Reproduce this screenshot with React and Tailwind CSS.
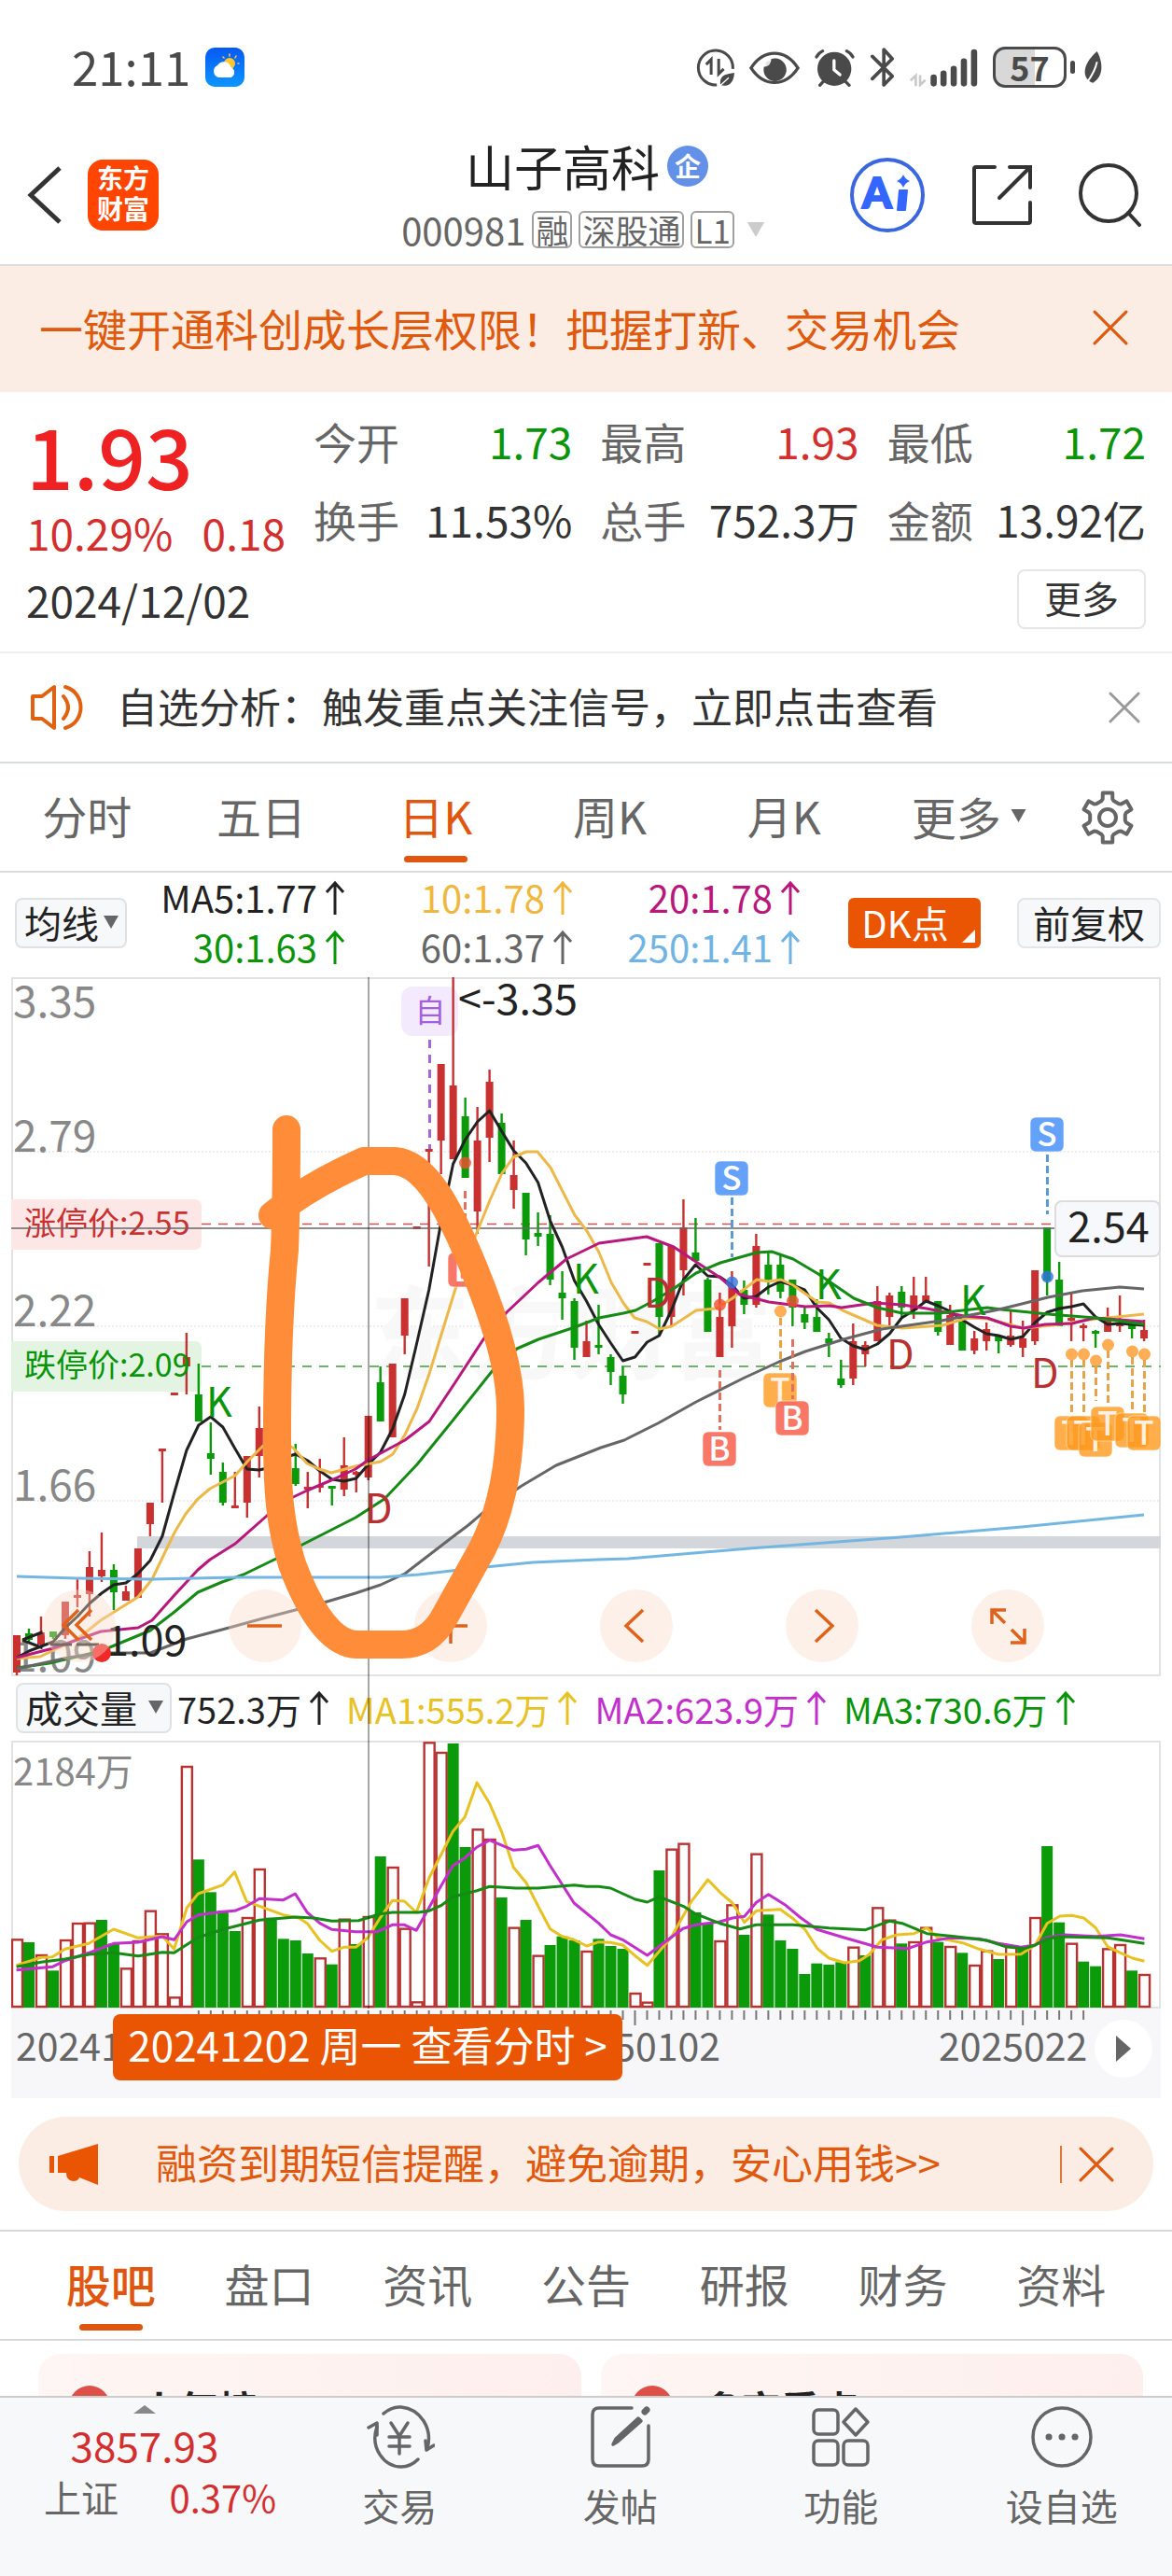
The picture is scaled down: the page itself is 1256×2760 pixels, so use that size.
import React from "react";

/* ---------- market data (y values in chart units) ---------- */

// [direction, high, body top, body bottom, low]
const CANDLES = [
  ["r", 1753, 1753, 1793, 1796], ["g", 1746, 1751, 1758, 1762], ["r", 1733, 1750, 1763, 1766], ["g", 1749, 1749, 1755, 1757],
  ["r", 1717, 1717, 1753, 1757], ["r", 1691, 1710, 1713, 1723], ["r", 1663, 1680, 1709, 1733], ["r", 1643, 1683, 1690, 1696],
  ["g", 1677, 1683, 1707, 1726], ["r", 1700, 1706, 1716, 1716], ["r", 1660, 1660, 1713, 1713], ["r", 1611, 1611, 1634, 1647],
  ["r", 1553, 1553, 1556, 1611], ["r", 1493, 1493, 1496, 1496], ["r", 1429, 1455, 1465, 1495], ["g", 1462, 1495, 1524, 1524],
  ["g", 1525, 1558, 1564, 1581], ["g", 1568, 1578, 1611, 1614], ["r", 1578, 1614, 1617, 1617], ["r", 1561, 1561, 1611, 1627],
  ["r", 1508, 1531, 1561, 1584], ["g", 1540, 1550, 1570, 1580], ["g", 1550, 1560, 1580, 1590], ["g", 1548, 1574, 1591, 1593],
  ["r", 1578, 1594, 1597, 1617], ["r", 1564, 1592, 1595, 1600], ["g", 1593, 1593, 1596, 1614], ["r", 1541, 1571, 1597, 1604],
  ["r", 1577, 1578, 1581, 1600], ["r", 1518, 1518, 1584, 1587], ["g", 1465, 1482, 1524, 1524], ["r", 1462, 1462, 1541, 1541],
  ["r", 1392, 1392, 1432, 1452], ["r", 1315, 1315, 1318, 1318], ["r", 1232, 1232, 1235, 1358], ["r", 1141, 1141, 1223, 1259],
  ["r", 1048, 1164, 1243, 1243], ["g", 1177, 1197, 1263, 1263], ["r", 1187, 1223, 1299, 1323], ["r", 1147, 1160, 1220, 1246],
  ["g", 1194, 1204, 1259, 1259], ["r", 1223, 1260, 1276, 1296], ["g", 1279, 1279, 1329, 1346], ["g", 1300, 1322, 1326, 1336],
  ["g", 1303, 1323, 1372, 1378], ["g", 1363, 1386, 1392, 1415], ["g", 1392, 1395, 1445, 1458], ["r", 1416, 1438, 1455, 1455],
  ["g", 1399, 1442, 1445, 1452], ["g", 1452, 1455, 1471, 1485], ["g", 1465, 1475, 1495, 1505], ["r", 1427, 1427, 1430, 1430],
  ["r", 1354, 1354, 1357, 1357], ["g", 1333, 1333, 1412, 1432], ["r", 1336, 1336, 1412, 1422], ["r", 1286, 1316, 1362, 1389],
  ["g", 1306, 1343, 1352, 1352], ["g", 1370, 1372, 1428, 1428], ["r", 1386, 1412, 1455, 1455], ["r", 1363, 1379, 1422, 1445],
  ["g", 1373, 1383, 1399, 1409], ["r", 1323, 1336, 1399, 1402], ["g", 1343, 1356, 1372, 1388], ["g", 1346, 1356, 1385, 1392],
  ["g", 1372, 1372, 1402, 1422], ["g", 1402, 1409, 1418, 1425], ["g", 1393, 1412, 1428, 1428], ["g", 1429, 1435, 1440, 1455],
  ["g", 1458, 1478, 1485, 1488], ["r", 1419, 1438, 1478, 1485], ["r", 1438, 1442, 1452, 1465], ["r", 1379, 1395, 1438, 1438],
  ["r", 1386, 1389, 1412, 1422], ["g", 1379, 1385, 1402, 1412], ["r", 1369, 1389, 1405, 1414], ["r", 1369, 1389, 1396, 1396],
  ["g", 1395, 1395, 1428, 1432], ["r", 1399, 1410, 1442, 1442], ["g", 1417, 1417, 1448, 1448], ["r", 1427, 1435, 1448, 1452],
  ["r", 1418, 1425, 1438, 1448], ["g", 1432, 1432, 1438, 1451], ["r", 1406, 1432, 1442, 1444], ["r", 1416, 1435, 1445, 1455],
  ["r", 1362, 1362, 1438, 1442], ["g", 1316, 1316, 1373, 1389], ["g", 1353, 1372, 1422, 1422], ["r", 1387, 1413, 1416, 1438],
  ["r", 1419, 1421, 1424, 1438], ["g", 1426, 1427, 1430, 1445], ["r", 1402, 1415, 1428, 1428], ["r", 1389, 1418, 1422, 1428],
  ["g", 1421, 1421, 1425, 1435], ["r", 1415, 1426, 1435, 1438],
];

const MA5 = [
  1777, 1770, 1765, 1760, 1745, 1733, 1719, 1708, 1699, 1697, 1687, 1673, 1647, 1600, 1555, 1528, 1519, 1530, 1553, 1575,
  1576, 1573, 1563, 1559, 1566, 1577, 1586, 1588, 1585, 1570, 1557, 1532, 1495, 1440, 1383, 1310, 1248, 1222, 1203, 1191,
  1213, 1234, 1247, 1268, 1309, 1337, 1373, 1395, 1420, 1440, 1459, 1455, 1439, 1432, 1405, 1372, 1356, 1368, 1369, 1378,
  1392, 1390, 1380, 1374, 1378, 1383, 1402, 1415, 1435, 1443, 1447, 1441, 1430, 1413, 1405, 1395, 1400, 1406, 1415, 1423,
  1430, 1432, 1436, 1433, 1418, 1407, 1403, 1401, 1398, 1412, 1420, 1419, 1420, 1421,
];

const xAt = (i) => 18 + i * 12.99;
const MA5_POINTS = MA5.map((y, i) => `${xAt(i).toFixed(1)},${y}`).join(" ");
const MA10_POINTS =
  "18,1778 43,1776 83,1757 108,1737 148,1712 163,1693 174,1670 187,1643 199,1623 212,1607 225,1596 252,1582 265,1567 282,1550 303,1547 314,1552 329,1569 342,1575 355,1579 381,1572 408,1567 421,1559 434,1538 447,1510 460,1473 488,1382 510,1324 525,1287 538,1258 550,1241 564,1235 576,1235 590,1252 616,1303 629,1320 642,1343 655,1375 668,1397 680,1413 693,1417 707,1425 720,1422 746,1405 767,1403 785,1392 811,1372 824,1374 837,1372 850,1378 876,1396 889,1397 903,1405 940,1421 967,1424 1010,1421 1037,1413 1058,1414 1097,1424 1136,1420 1174,1414 1197,1412 1226,1409";
const MA20_POINTS =
  "18,1777 57,1767 108,1749 148,1745 163,1737 187,1710 212,1683 225,1672 252,1655 286,1625 310,1607 329,1598 355,1587 381,1575 395,1565 434,1544 460,1524 486,1485 520,1433 543,1407 577,1375 607,1350 642,1333 693,1326 722,1337 746,1353 772,1370 793,1388 824,1396 863,1401 889,1400 902,1402 937,1397 967,1399 993,1403 1033,1411 1058,1413 1083,1422 1097,1424 1120,1420 1149,1419 1173,1413 1226,1417";
const MA30_POINTS =
  "18,1788 53,1783 108,1770 161,1748 187,1728 212,1707 238,1696 261,1688 296,1671 322,1657 381,1627 412,1607 447,1570 486,1522 529,1468 554,1446 577,1436 616,1423 642,1413 668,1408 681,1405 700,1395 720,1383 746,1365 772,1354 811,1343 827,1342 850,1350 877,1366 915,1392 940,1402 967,1408 1006,1408 1058,1402 1073,1404 1123,1409 1174,1413 1226,1420";
const MA60_POINTS =
  "18,1789 73,1777 108,1772 161,1772 200,1757 238,1747 282,1735 347,1718 381,1708 408,1699 434,1687 460,1667 486,1647 502,1635 522,1618 559,1593 596,1571 644,1552 669,1544 705,1526 746,1503 798,1477 835,1460 863,1449 904,1436 945,1425 1009,1416 1066,1405 1087,1400 1123,1391 1160,1384 1200,1380 1226,1382";
const MA250_POINTS =
  "18,1690 82,1692 163,1693 252,1691 408,1691 449,1688 510,1681 571,1675 640,1672 673,1671 803,1660 965,1648 1095,1637 1226,1624";

const VOL_DIR =
  "rgrgrrrggrrrrrrggggrrggggrgrgrgrrrrrggrrgrgrgggrgggrrgrrggrrgrgggggggrgrrgrrgrgrrgrgrggrggrrgr";
const VOL_TOP = [
  835, 846, 885, 937, 837, 783, 782, 774, 850, 928, 840, 743, 817, 1021, 279, 580, 685, 745, 810, 765, 609, 767, 835, 840,
  882, 895, 917, 770, 852, 762, 570, 603, 800, 1036, 202, 234, 207, 540, 481, 513, 702, 797, 774, 887, 855, 827, 840, 873,
  835, 858, 867, 1008, 1037, 615, 545, 527, 750, 785, 840, 724, 822, 560, 757, 840, 867, 948, 914, 918, 910, 860, 888, 733,
  773, 850, 843, 797, 845, 858, 880, 918, 872, 900, 856, 860, 765, 537, 782, 848, 908, 923, 865, 852, 937, 948,
];

// Volume averages, in thirds of a pixel down and 1.2484 units per pixel across.
const scaleVol = (pts) => pts.map(([u, v]) => `${(u / 1.2484).toFixed(1)},${(1800 + v / 3).toFixed(1)}`).join(" ");
const VMA1 = scaleVol([
  [22, 920], [55, 895], [70, 893], [87, 868], [119, 850], [152, 804], [185, 832], [217, 826], [233, 868], [250, 735],
  [265, 690], [298, 662], [314, 620], [330, 715], [379, 758], [400, 768], [411, 785], [428, 840], [444, 875], [460, 862],
  [476, 862], [492, 832], [508, 770], [525, 712], [541, 714], [557, 750], [574, 640], [606, 490], [622, 443], [638, 333],
  [655, 400], [671, 490], [687, 605], [704, 655], [720, 730], [736, 803], [752, 827], [768, 838], [785, 858], [801, 845],
  [817, 847], [833, 855], [850, 890], [866, 920], [882, 875], [898, 830], [925, 715], [947, 645], [963, 685], [980, 720],
  [996, 782], [1012, 745], [1044, 740], [1061, 770], [1077, 805], [1093, 865], [1109, 897], [1130, 912], [1150, 905],
  [1163, 885], [1180, 838], [1200, 822], [1223, 818], [1240, 800], [1255, 832], [1288, 848], [1310, 868], [1336, 885],
  [1366, 884], [1385, 855], [1401, 785], [1418, 762], [1434, 760], [1450, 768], [1466, 800], [1482, 860], [1499, 880],
  [1515, 897], [1531, 907],
]);
const VMA2 = scaleVol([
  [22, 935], [70, 925], [87, 905], [119, 880], [152, 850], [185, 846], [217, 828], [233, 838], [250, 780], [265, 758],
  [298, 748], [314, 745], [330, 730], [347, 706], [379, 710], [395, 690], [411, 750], [428, 785], [444, 805], [476, 812],
  [505, 812], [525, 790], [541, 790], [557, 808], [574, 735], [590, 665], [606, 600], [622, 575], [638, 540], [655, 518],
  [687, 550], [704, 547], [720, 535], [736, 600], [752, 660], [768, 720], [801, 785], [817, 822], [833, 838], [866, 888],
  [898, 830], [914, 802], [931, 790], [963, 780], [980, 768], [996, 763], [1012, 718], [1028, 692], [1050, 725],
  [1070, 765], [1093, 805], [1125, 828], [1150, 845], [1174, 862], [1215, 866], [1240, 845], [1271, 832], [1310, 835],
  [1336, 850], [1366, 862], [1385, 855], [1401, 830], [1425, 822], [1466, 827], [1499, 822], [1531, 835],
]);
const VMA3 = scaleVol([
  [22, 925], [55, 910], [87, 900], [119, 885], [152, 880], [185, 890], [217, 878], [233, 880], [265, 830], [298, 805],
  [347, 775], [395, 765], [420, 768], [444, 778], [480, 776], [508, 755], [525, 750], [560, 750], [574, 745], [590, 728],
  [606, 700], [638, 680], [655, 667], [690, 672], [720, 672], [768, 662], [785, 667], [801, 667], [817, 672], [850, 708],
  [866, 717], [882, 700], [914, 730], [931, 755], [963, 785], [990, 803], [1012, 790], [1061, 790], [1109, 800],
  [1158, 806], [1190, 778], [1207, 785], [1240, 818], [1288, 830], [1320, 840], [1345, 860], [1370, 866], [1385, 855],
  [1401, 835], [1418, 828], [1482, 832], [1531, 850],
]);

const HUES = { r: "#c93030", g: "#0a9a0a" };

/* ---------- small drawings ---------- */

function Cross({ className }) {
  return (
    <svg viewBox="0 0 36 36" className={className} fill="none" stroke="currentColor" strokeWidth="3" strokeLinecap="round" aria-hidden="true">
      <path d="M2 2L34 34M34 2L2 34" />
    </svg>
  );
}

function Up() {
  return (
    <svg viewBox="0 0 22 38" className="h-[38px] w-[22px] shrink-0" fill="none" stroke="currentColor" strokeWidth="3" aria-hidden="true">
      <path d="M11 37V3M2 13L11 3L20 13" />
    </svg>
  );
}

function Caret({ className }) {
  return (
    <svg viewBox="0 0 16 14" className={className} fill="currentColor" aria-hidden="true">
      <path d="M0 0H16L8 14Z" />
    </svg>
  );
}

const GEAR = (() => {
  const pts = [];
  for (let k = 0; k < 6; k++) {
    const a = -90 + k * 60;
    [[-21, 19], [-15, 20.5], [-11, 27], [11, 27], [15, 20.5], [21, 19]].forEach(([d, r]) => {
      const t = ((a + d) * Math.PI) / 180;
      pts.push(`${(30 + r * Math.cos(t)).toFixed(1)},${(30 + r * Math.sin(t)).toFixed(1)}`);
    });
  }
  return pts.join(" ");
})();

function Gear() {
  return (
    <svg viewBox="0 0 60 60" className="size-[60px]" fill="none" stroke="#666" strokeWidth="4" strokeLinejoin="round" aria-hidden="true">
      <polygon points={GEAR} />
      <circle cx="30" cy="30" r="9" />
    </svg>
  );
}

function StatusBar() {
  return (
    <div className="flex items-center justify-between pt-[42px] pr-[74px] pb-[44px] pl-[77px] text-[#4a4a4a]">
      <div className="flex items-center gap-4">
        <span className="pb-1 text-[51px] leading-[56px]">21:11</span>
        <svg viewBox="0 0 42 42" className="size-[42px]" aria-hidden="true">
          <defs>
            <linearGradient id="sky" x1="0" y1="0" x2="0" y2="1">
              <stop offset="0" stopColor="#0659f3" />
              <stop offset="1" stopColor="#0d96ff" />
            </linearGradient>
          </defs>
          <rect width="42" height="42" rx="10" fill="url(#sky)" />
          <g stroke="#ffc52e" strokeWidth="1.6" strokeLinecap="round">
            <path d="M26 7V9M19 10L20 11M33 9L32 11M36 17H35" />
          </g>
          <circle cx="26" cy="17" r="6" fill="#ffc52e" />
          <path d="M14 32a7 7 0 0 1-1-13a8 8 0 0 1 14.500 2a6 6 0 0 1 0 11z" fill="#fff" />
        </svg>
      </div>
      <div className="flex items-center gap-4">
        <svg viewBox="28 35 122 122" className="size-[41px]" fill="none" stroke="currentColor" strokeWidth="9" aria-hidden="true">
          <path d="M94 151A55 55 0 1 1 145 100" />
          <path d="M76 118V70L60 86" />
          <path d="M100 68V116L116 100" />
          <path d="M106 152c-6-32 16-36 44-40c-2 32-18 46-44 40z" fill="currentColor" stroke="none" />
          <path d="M104 154L132 128" stroke="#fff" strokeWidth="4" />
        </svg>
        <svg viewBox="198 40 162 112" className="h-[37px] w-[54px]" aria-hidden="true">
          <path d="M203 97C245 34 313 34 355 97C313 160 245 160 203 97Z" fill="none" stroke="currentColor" strokeWidth="10" />
          <path d="M268 68A37 37 0 1 1 245 93A22 22 0 0 0 268 68Z" fill="currentColor" />
          <circle cx="262" cy="86" r="12" fill="currentColor" opacity="0.15" />
        </svg>
        <svg viewBox="408 33 130 124" className="h-[41px] w-[43px]" fill="none" stroke="currentColor" strokeWidth="10" strokeLinecap="round" aria-hidden="true">
          <circle cx="472" cy="99" r="55" fill="currentColor" stroke="none" />
          <path d="M414 60Q420 48 434 41M512 41Q526 48 532 60M425 152L436 140M520 152L508 140" />
          <path d="M471 72V102L490 118" stroke="#fff" />
        </svg>
        <svg viewBox="582 32 80 126" className="h-[42px] w-[27px]" fill="none" stroke="currentColor" strokeWidth="11" strokeLinecap="round" strokeLinejoin="round" aria-hidden="true">
          <path d="M590 60L654 124L627 152V38L654 68L590 132" />
        </svg>
        <svg viewBox="708 34 220 124" className="h-[41px] w-[73px]" aria-hidden="true">
          <path d="M727 156V122L710 138M741 120V152L758 136" fill="none" stroke="#c9c9c9" strokeWidth="8" />
          <g stroke="currentColor" strokeWidth="20" strokeLinecap="round">
            <path d="M785 128V147M817 115V147M850 100V147M883 76V147M916 46V147" />
          </g>
        </svg>
        <div className="flex items-center gap-1">
          <div className="flex h-[44px] w-[79px] items-center justify-center rounded-[13px] border-[3px] border-[#4a4a4a] bg-[linear-gradient(90deg,#d8d8d8_58%,#fff_58%)] pb-0.5 text-[36px] leading-none font-bold">
            57
          </div>
          <div className="h-[14px] w-[5px] rounded-full bg-[#4a4a4a]" />
          <svg viewBox="1256 44 66 102" className="ml-1 h-[34px] w-[22px]" aria-hidden="true">
            <path d="M1303 44C1318 70 1330 122 1290 145C1262 138 1244 96 1303 44Z" fill="currentColor" />
            <path d="M1303 78Q1296 110 1272 142" stroke="#fff" strokeWidth="6" fill="none" />
          </svg>
        </div>
      </div>
    </div>
  );
}

function Tag({ children }) {
  return (
    <span className="flex h-10 items-center rounded-md border-2 border-[#a0a0a0] px-0.5 pb-0.5 text-[35px] leading-none">{children}</span>
  );
}

function Header() {
  return (
    <header className="flex items-center border-b-2 border-[#ddd] pr-[32px] pb-[13px] pl-[28px]">
      <div className="flex flex-1 items-center gap-7 pt-0.5">
        <button aria-label="返回" className="py-2">
          <svg viewBox="0 0 38 62" className="h-[62px] w-[38px]" fill="none" stroke="#333" strokeWidth="5" aria-hidden="true">
            <path d="M36 2L5 31L36 60" />
          </svg>
        </button>
        <div className="flex size-[76px] flex-col items-center justify-center rounded-[16px] bg-[#ff4500] pb-1 text-[28px] leading-[33px] font-bold text-white">
          <span>东方</span>
          <span>财富</span>
        </div>
      </div>
      <div className="flex flex-col items-center text-[#666]">
        <div className="flex items-center gap-2 pl-1.5">
          <h1 className="text-[52px] leading-[64px] text-[#222]">山子高科</h1>
          <span className="flex size-[44px] items-center justify-center rounded-full bg-[#6391e8] pb-0.5 text-[28px] leading-none font-bold text-white">
            企
          </span>
        </div>
        <button className="flex items-center gap-[7px] pt-3">
          <span className="text-[40px] leading-[48px]">000981</span>
          <Tag>融</Tag>
          <Tag>深股通</Tag>
          <Tag>L1</Tag>
          <Caret className="ml-1 h-4 w-6 text-[#ccc]" />
        </button>
      </div>
      <div className="flex flex-1 items-center justify-end gap-[49px] pt-0.5">
        <button aria-label="Ai">
          <svg viewBox="0 0 82 82" className="size-[82px]" aria-hidden="true">
            <circle cx="41" cy="41" r="38" fill="none" stroke="#3a66e0" strokeWidth="4" />
            <text x="14" y="55" fontFamily="Lato, sans-serif" fontWeight="900" fontSize="45" fill="#3366ff" stroke="#3366ff" strokeWidth="2">
              A
            </text>
            <path d="M54 36H62L60 57H52Z" fill="#3366ff" stroke="#3366ff" strokeWidth="2" strokeLinejoin="round" />
            <path d="M58 19Q60 24 65 26Q60 28 58 33Q56 28 51 26Q56 24 58 19Z" fill="#3366ff" />
          </svg>
        </button>
        <button aria-label="分享">
          <svg viewBox="0 0 66 66" className="size-[66px]" fill="none" stroke="#333" strokeWidth="4" strokeLinecap="round" aria-hidden="true">
            <path d="M25 3H5Q3 3 3 5V61Q3 63 5 63H61Q63 63 63 61V41" />
            <path d="M41 3H63V25M62 4L30 36" />
          </svg>
        </button>
        <button aria-label="搜索">
          <svg viewBox="0 0 68 68" className="size-[68px]" fill="none" stroke="#333" strokeWidth="4" strokeLinecap="round" aria-hidden="true">
            <circle cx="32" cy="32" r="30" />
            <path d="M53 53L65 66" />
          </svg>
        </button>
      </div>
    </header>
  );
}

function Stat({ label, value, tone }) {
  return (
    <div className="flex items-center justify-between">
      <dt className="text-[#666]">{label}</dt>
      <dd className={tone}>{value}</dd>
    </div>
  );
}

function Quote() {
  return (
    <section className="border-b-2 border-[#eee] pt-[22px] pr-[28px] pb-[24px] pl-[28px] text-[46px] leading-[60px] text-[#333]">
      <div className="flex gap-[30px]">
        <div className="w-[278px] shrink-0 text-[#d32f2f]">
          <div className="pb-2 text-[89px] leading-[90px] font-medium text-[#ee2222]">1.93</div>
          <div className="flex justify-between">
            <span>10.29%</span>
            <span>0.18</span>
          </div>
        </div>
        <dl className="grid flex-1 grid-cols-3 content-start gap-x-[30px] gap-y-[24px]">
          <Stat label="今开" value="1.73" tone="text-[#0a940a]" />
          <Stat label="最高" value="1.93" tone="text-[#d32f2f]" />
          <Stat label="最低" value="1.72" tone="text-[#0a940a]" />
          <Stat label="换手" value="11.53%" tone="text-[#333]" />
          <Stat label="总手" value="752.3万" tone="text-[#333]" />
          <Stat label="金额" value="13.92亿" tone="text-[#333]" />
        </dl>
      </div>
      <div className="flex items-center justify-between pt-[10px]">
        <time dateTime="2024-12-02">2024/12/02</time>
        <button className="rounded-lg border-2 border-[#e6e6e6] px-[27px] pb-1 text-[40px] leading-[56px]">更多</button>
      </div>
    </section>
  );
}

function Notice() {
  return (
    <section className="flex items-center border-b-2 border-[#d8dcdc] py-[28px] pr-[34px] pl-[32px] text-[#333]">
      <svg viewBox="0 0 58 50" className="h-[50px] w-[58px] shrink-0" fill="none" stroke="#e06210" strokeWidth="4" strokeLinejoin="round" strokeLinecap="round" aria-hidden="true">
        <path d="M3 13H13L26 3V47L13 37H3Z" />
        <path d="M36 13Q46 25 36 37" />
        <path d="M38 3C60 9 60 41 38 47" />
      </svg>
      <p className="flex-1 pb-1 pl-[35px] text-[44px] leading-[56px]">自选分析：触发重点关注信号，立即点击查看</p>
      <button aria-label="关闭">
        <Cross className="size-[34px] text-[#999]" />
      </button>
    </section>
  );
}

function PeriodTabs() {
  return (
    <nav className="grid grid-cols-[repeat(5,187fr)_210fr_88fr_25fr] items-center justify-items-center border-b-2 border-[#d8dcdc] text-[48px] leading-[64px] text-[#666]">
      {["分时", "五日", "日K", "周K", "月K"].map((name) => {
        const on = name === "日K";
        return (
          <button key={name} className={on ? "flex flex-col items-center text-[#e0560e]" : "flex flex-col items-center"}>
            <span className="pt-[23px] pb-[12px]">{name}</span>
            <span className={on ? "mb-[9px] h-[7px] w-[68px] rounded-full bg-[#e0560e]" : "mb-[9px] h-[7px] w-[68px]"} />
          </button>
        );
      })}
      <button className="flex items-center gap-2.5 pb-1">
        更多
        <Caret className="h-[14px] w-[17px]" />
      </button>
      <button aria-label="设置">
        <Gear />
      </button>
    </nav>
  );
}

function MaValue({ text, tone }) {
  return (
    <span className={`flex items-center justify-end gap-2 ${tone}`}>
      {text}
      <Up />
    </span>
  );
}

function PillSelect({ label, width }) {
  return (
    <label className={`relative block shrink-0 ${width}`}>
      <select
        aria-label={label}
        className="block w-full appearance-none rounded-lg border-2 border-[#dfe2e5] bg-[#f6f8fa] pr-6 pb-0.5 pl-2 text-[40px] leading-[48px] text-[#222]"
      >
        <option>{label}</option>
      </select>
      <Caret className="pointer-events-none absolute top-[19px] right-[9px] h-[14px] w-4 text-[#666]" />
    </label>
  );
}

function MaLegend() {
  return (
    <section className="flex items-center pr-3 pb-1 pl-4 text-[40px] leading-[53px]">
      <PillSelect label="均线" width="w-[120px]" />
      <div className="grid w-[722px] grid-cols-[234fr_244fr_244fr] pb-0.5">
        <MaValue text="MA5:1.77" tone="text-[#222]" />
        <MaValue text="10:1.78" tone="text-[#efb73e]" />
        <MaValue text="20:1.78" tone="text-[#b8187c]" />
        <MaValue text="30:1.63" tone="text-[#0a940a]" />
        <MaValue text="60:1.37" tone="text-[#666]" />
        <MaValue text="250:1.41" tone="text-[#6fb4e4]" />
      </div>
      <div className="ml-auto flex gap-[39px]">
        <button className="relative w-[142px] rounded-md bg-[#ea5504] pr-[20px] pb-0.5 text-center text-[40px] leading-[50px] text-white">
          DK点
          <svg viewBox="0 0 14 14" className="absolute right-1.5 bottom-1.5 size-3.5" fill="#fff" aria-hidden="true">
            <path d="M14 0V14H0Z" />
          </svg>
        </button>
        <button className="w-[154px] rounded-lg border-2 border-[#e3e6e8] bg-[#f6f8fa] pb-0.5 text-center text-[40px] leading-[48px] text-[#222]">
          前复权
        </button>
      </div>
    </section>
  );
}

/* ---------- candle chart ---------- */

const SIGNALS = [
  { k: "B", x: 498, dot: 1247, from: 1277, to: 1341, top: 1343 },
  { k: "S", x: 784, dot: 1375, from: 1284, to: 1348, top: 1245 },
  { k: "S", x: 1122, dot: 1369, from: 1238, to: 1302, top: 1198 },
  { k: "T", x: 836, dot: 1406, from: 1413, to: 1470, top: 1472 },
  { k: "B", x: 849, dot: 1395, from: 1436, to: 1500, top: 1502 },
  { k: "B", x: 771, dot: 1399, from: 1469, to: 1533, top: 1535 },
  { k: "T", x: 1148, dot: 1452, from: 1458, to: 1516, top: 1518 },
  { k: "T", x: 1161, dot: 1452, from: 1458, to: 1516, top: 1518 },
  { k: "T", x: 1174, dot: 1459, from: 1465, to: 1502, top: 1525 },
  { k: "T", x: 1187, dot: 1442, from: 1448, to: 1506, top: 1508 },
  { k: "T", x: 1213, dot: 1449, from: 1455, to: 1513, top: 1515 },
  { k: "T", x: 1226, dot: 1452, from: 1458, to: 1516, top: 1518 },
];
const SIGNAL_FILL = { B: "#f8705f", S: "#5c9efa", T: "#ff9a1f" };
const SIGNAL_LINE = { B: "#e0705f", S: "#5a9ad6", T: "#e6a34a" };
const SIGNAL_DOT = { B: "#f0502f", S: "#2f74e0", T: "#ff9a2a" };

function CandleChart() {
  return (
    <svg viewBox="12 1048 1232 750" className="block h-auto w-full" role="img" aria-label="日K线图">
      <rect x="13" y="1049" width="1230" height="747" fill="none" stroke="#e2e2e2" strokeWidth="2" />
      <g stroke="#d9d9d9" strokeWidth="1" strokeDasharray="2 2">
        <path d="M12 1235H1244M12 1422H1244M12 1609H1244" />
      </g>
      <text x="396" y="1470" fontSize="108" fontWeight="700" fill="#f8f8f8">东方财富</text>
      <g fontSize="46" fill="#888">
        <text x="14" y="1091">3.35</text>
        <text x="14" y="1235">2.79</text>
        <text x="14" y="1422">2.22</text>
        <text x="14" y="1609">1.66</text>
        <text x="14" y="1792">1.09</text>
      </g>
      <path d="M12 1286H208Q216 1286 216 1294V1332Q216 1340 208 1340H12Z" fill="#fde7e6" />
      <path d="M12 1438H208Q216 1438 216 1446V1484Q216 1492 208 1492H12Z" fill="#e3f4e3" />
      <rect x="147" y="1647" width="1097" height="13" fill="#d3d6db" />
      <path d="M216 1312.500H1128" stroke="#d05050" strokeWidth="1.600" strokeDasharray="10 8" />
      <path d="M216 1465H1244" stroke="#6cb46c" strokeWidth="1.800" strokeDasharray="10 8" />
      <text x="26" y="1324" fontSize="34" fill="#c93030">涨停价:2.55</text>
      <rect x="430" y="1058" width="61" height="53" rx="12" fill="#f4eafe" />
      <text x="461" y="1096" fontSize="33" textAnchor="middle" fill="#a35fdc">自</text>
      <path d="M460.500 1115V1234" stroke="#a566d8" strokeWidth="3" strokeDasharray="9 7" />
      {CANDLES.map(([d, hi, top, bot, lo], i) => (
        <g key={i} fill={HUES[d]}>
          <rect x={xAt(i) - 1.2} y={hi} width="2.4" height={lo - hi} />
          <rect x={xAt(i) - 4} y={top} width="8" height={bot - top} />
        </g>
      ))}
      <text x="26" y="1476" fontSize="34" fill="#0a940a">跌停价:2.09</text>
      <path d="M12 1317H1132" stroke="#666" strokeWidth="1.500" />
      <g fill="none" strokeWidth="3" strokeLinejoin="round">
        <polyline points={MA5_POINTS} stroke="#222" />
        <polyline points={MA10_POINTS} stroke="#edb84a" />
        <polyline points={MA20_POINTS} stroke="#b8187c" />
        <polyline points={MA30_POINTS} stroke="#158a15" />
        <polyline points={MA60_POINTS} stroke="#666" />
        <polyline points={MA250_POINTS} stroke="#74b6e2" />
      </g>
      <g fontSize="43" fill="#0a940a">
        <text x="221" y="1519">K</text>
        <text x="614" y="1387">K</text>
        <text x="874" y="1393">K</text>
        <text x="1029" y="1410">K</text>
      </g>
      <g fontSize="43" fill="#b83030">
        <text x="391" y="1633">D</text>
        <text x="690" y="1402">D</text>
        <text x="950" y="1468">D</text>
        <text x="1105" y="1488">D</text>
      </g>
      <g fontSize="45" fill="#222">
        <text x="491" y="1088">&lt;-3.35</text>
        <text x="22" y="1775">&lt;</text>
        <text x="113" y="1775">1.09</text>
      </g>
      <path d="M54 1763H77M82 1763H106" stroke="#222" strokeWidth="3" />
      <circle cx="109" cy="1772" r="10" fill="#f02828" />
      {SIGNALS.map((s, i) => (
        <g key={i}>
          <path d={`M${s.x + 0.5} ${s.from}V${s.to}`} stroke={SIGNAL_LINE[s.k]} strokeWidth="3" strokeDasharray="8 4" />
          <circle cx={s.x + 0.5} cy={s.dot} r="6.5" fill={SIGNAL_DOT[s.k]} opacity="0.8" />
          <rect x={s.x - 18} y={s.top} width="36" height="37" rx="6" fill={SIGNAL_FILL[s.k]} opacity={s.k === "T" ? 0.8 : 0.95} stroke="#fff" strokeOpacity="0.6" />
          <text x={s.x} y={s.top + 31} fontSize="35" fontWeight="500" textAnchor="middle" fill="#fff" opacity={s.k === "T" ? 0.85 : 1}>
            {s.k}
          </text>
        </g>
      ))}
      <rect x="1131" y="1288" width="112" height="59" rx="7" fill="#f7f8fb" stroke="#dcdcdc" strokeWidth="2" />
      <text x="1188" y="1332" fontSize="45" textAnchor="middle" fill="#222">2.54</text>
    </svg>
  );
}

const CONTROLS = [
  ["最早", "M38 22L22 38L38 54M52 22L36 38L52 54"],
  ["缩小", "M20 39H57"],
  ["放大", "M20 39H57M39 20V58"],
  ["向左", "M46 22L28 39L46 56"],
  ["向右", "M32 22L50 39L32 56"],
  ["全屏", "M22 37V22H37M22 22L36 36M42 57H57V42M57 57L43 43"],
];

function ChartControls() {
  return (
    <div className="absolute inset-x-0 bottom-[16px] flex justify-between pr-[125px] pl-[34px]">
      {CONTROLS.map(([name, d]) => (
        <button key={name} aria-label={name} className="size-[78px] rounded-full bg-[#fbd9c6]/40">
          <svg viewBox="0 0 78 78" className="size-full" fill="none" stroke="#e0621a" strokeWidth="3.5" aria-hidden="true">
            <path d={d} />
          </svg>
        </button>
      ))}
    </div>
  );
}

function Marker() {
  return (
    <svg viewBox="12 1048 1232 750" className="pointer-events-none absolute inset-0 z-10 h-full w-full" aria-hidden="true">
      <path
        d="M292 1303C320 1280 352 1262 390 1245H423C458 1247 484 1302 508 1360C530 1414 547 1470 547 1510C547 1570 538 1620 516 1662L476 1734Q460 1763 430 1763H382C350 1762 326 1712 313 1677C300 1634 297 1600 297 1537C297 1460 300 1390 305 1340Q307 1290 307 1211"
        fill="none"
        stroke="#ff8c38"
        strokeWidth="30"
        strokeLinecap="round"
        strokeLinejoin="round"
      />
    </svg>
  );
}

function VolumeChart() {
  return (
    <svg viewBox="12 1866 1232 287" className="block h-auto w-full" role="img" aria-label="成交量图">
      <rect x="13" y="1867" width="1230" height="285" fill="none" stroke="#e2e2e2" strokeWidth="2" />
      <text x="14" y="1914" fontSize="40" fill="#888">2184万</text>
      {VOL_TOP.map((v, i) => {
        const top = 1800 + v / 3;
        const x = xAt(i);
        return VOL_DIR[i] === "g" ? (
          <rect key={i} x={x - 6} y={top} width="12" height={2152 - top} fill="#0a9a0a" />
        ) : (
          <rect key={i} x={x - 5} y={top + 1} width="11" height={2150 - top} fill="#fff" stroke="#b83232" strokeWidth="2.4" />
        );
      })}
      <g fill="none" strokeWidth="3" strokeLinejoin="round">
        <polyline points={VMA1} stroke="#e8c122" />
        <polyline points={VMA2} stroke="#c32fcb" />
        <polyline points={VMA3} stroke="#158a15" />
      </g>
    </svg>
  );
}

function TimeAxis() {
  return (
    <div className="relative bg-[#f7f7fa]">
      <svg viewBox="12 2153 1232 96" className="block h-auto w-full" aria-hidden="true">
        <g stroke="#777" strokeWidth="2">
          {Array.from({ length: 74 }, (_, k) => k + 15).map((i) => (
            <path key={i} d={`M${xAt(i)} 2155V${i === 51 || i === 83 ? 2171 : 2165}`} />
          ))}
        </g>
        <g fontSize="41" fill="#666">
          <text x="17" y="2209">20241</text>
          <text x="681" y="2209" textAnchor="middle">20250102</text>
          <text x="1006" y="2209">2025022</text>
        </g>
      </svg>
      <button className="absolute top-[6px] left-[109px] w-[546px] rounded-lg bg-[#ea5504] pt-0.5 pb-[9px] text-center text-[44px] leading-[60px] whitespace-nowrap text-white">
        20241202 周一 查看分时 &gt;
      </button>
      <button aria-label="播放" className="absolute top-[12px] right-[9px] flex size-[62px] items-center justify-center rounded-full bg-white">
        <svg viewBox="0 0 16 28" className="h-7 w-4" fill="#666" aria-hidden="true">
          <path d="M0 0L16 14L0 28Z" />
        </svg>
      </button>
    </div>
  );
}

function Charts() {
  return (
    <section className="relative mx-3">
      <div className="relative">
        <CandleChart />
        <ChartControls />
        <Marker />
      </div>
      <div className="flex items-center gap-[18px] pt-[6px] pb-2 pl-[5px] text-[38px] leading-[53px] whitespace-nowrap">
        <div className="flex items-center gap-1.5">
          <PillSelect label="成交量" width="w-[167px]" />
          <MaValue text="752.3万" tone="text-[#222]" />
        </div>
        <MaValue text="MA1:555.2万" tone="text-[#e8c122]" />
        <MaValue text="MA2:623.9万" tone="text-[#c32fcb]" />
        <MaValue text="MA3:730.6万" tone="text-[#0a940a]" />
      </div>
      <VolumeChart />
      <div className="pointer-events-none absolute top-0 bottom-[90px] left-[31%] w-0.5 bg-black/35" />
      <TimeAxis />
    </section>
  );
}

function Promo() {
  return (
    <section className="mx-5 my-5 flex items-center rounded-full bg-[#fcede4] py-[22px] pr-[42px] pl-[33px] text-[#e0590e]">
      <svg viewBox="0 0 52 44" className="h-11 w-[52px] shrink-0" fill="#ea5504" aria-hidden="true">
        <path d="M0 13H5V31H0Z" />
        <path d="M9 13L52 0V44L32 36Q31 40 25 40Q18 39 18 31L9 31Z" />
      </svg>
      <p className="flex-1 pb-1 pl-[62px] text-[44px] leading-[53px]">融资到期短信提醒，避免逾期，安心用钱&gt;&gt;</p>
      <span className="mr-[18px] h-10 w-0.5 bg-[#e0763a]" />
      <button aria-label="关闭">
        <Cross className="size-[38px]" />
      </button>
    </section>
  );
}

function InfoTabs() {
  return (
    <nav className="grid grid-cols-7 border-y-2 border-[#d9d9d9] px-[34px] text-[48px] leading-[64px] text-[#666]">
      {["股吧", "盘口", "资讯", "公告", "研报", "财务", "资料"].map((name, i) => (
        <button key={name} className={i === 0 ? "flex flex-col items-center font-medium text-[#e0560e]" : "flex flex-col items-center"}>
          <span className="pt-[23px] pb-[12px]">{name}</span>
          <span className={i === 0 ? "mb-[9px] h-[7px] w-[68px] rounded-full bg-[#e0560e]" : "mb-[9px] h-[7px] w-[68px]"} />
        </button>
      ))}
    </nav>
  );
}

function Cards() {
  return (
    <section className="grid h-[59px] grid-cols-2 gap-[21px] overflow-hidden pt-[14px] pr-[31px] pl-[41px]">
      {["人气榜", "多空看点"].map((name) => (
        <div key={name} className="flex h-[120px] items-start gap-[32px] rounded-t-[24px] bg-linear-to-r from-[#fef6f4] to-[#fdefed] pt-[34px] pl-[33px]">
          <span className="size-[44px] rounded-full bg-[#dc5048]" />
          <h2 className="text-[42px] leading-[48px] font-bold text-[#222]">{name}</h2>
        </div>
      ))}
    </section>
  );
}

function BottomItem({ name, children }) {
  return (
    <button className="flex flex-1 flex-col items-center gap-[14px]">
      <svg viewBox="0 0 76 68" className="h-[68px] w-[76px]" fill="none" stroke="#666" strokeWidth="3.500" strokeLinecap="round" strokeLinejoin="round" aria-hidden="true">
        {children}
      </svg>
      <span className="leading-[50px]">{name}</span>
    </button>
  );
}

function BottomBar() {
  return (
    <footer className="flex border-t-2 border-[#ccc] bg-[#f7f8fa] pt-[8px] pb-[51px] text-[40px] text-[#666]">
      <button className="flex w-[310px] flex-col items-center text-[#d32f2f]">
        <svg viewBox="0 0 24 9" className="h-[9px] w-6" fill="#888" aria-hidden="true">
          <path d="M0 9L12 0L24 9Z" />
        </svg>
        <span className="mt-[5px] text-[44px] leading-[56px]">3857.93</span>
        <span className="flex w-full items-center justify-between pr-[14px] pl-[47px] leading-[56px]">
          <span className="text-[#666]">上证</span>
          <span>0.37%</span>
        </span>
      </button>
      <BottomItem name="交易">
        <path d="M14 23C6 46 22 66 40 66Q50 66 58 58M21 9Q30 1 40 2C60 4 74 24 68 46" />
        <path d="M5 24L14 19V32M75 43L67 48L66 38" />
        <path d="M29 19L38 33L47 19M27 34H49M27 44H49M38 33V52" />
      </BottomItem>
      <BottomItem name="发帖">
        <path d="M50 3H15Q8 3 8 10V58Q8 65 15 65H61Q68 65 68 58V22" />
        <path d="M30 42L33 36L57 14L60 17L35 39Z" fill="#666" />
        <path d="M64 7L66 5" strokeWidth="7" />
      </BottomItem>
      <BottomItem name="功能">
        <rect x="9" y="5" width="26" height="26" rx="5" />
        <rect x="9" y="38" width="26" height="26" rx="5" />
        <rect x="41" y="38" width="26" height="26" rx="5" />
        <path d="M54 4L67 18L54 32L41 18Z" />
      </BottomItem>
      <BottomItem name="设自选">
        <circle cx="38" cy="34" r="31" />
        <path d="M24 34H24.100M38 34H38.100M52 34H52.100" strokeWidth="7" />
      </BottomItem>
    </footer>
  );
}

export default function App() {
  return (
    <div className="w-full overflow-hidden bg-white font-['Noto_Sans_CJK_SC',sans-serif]">
      <StatusBar />
      <Header />
      <section className="flex items-center justify-between bg-[#fcede4] pt-[38px] pr-[47px] pb-[41px] pl-[42px] text-[#df5a0e]">
        <p className="text-[47px] leading-[56px]">一键开通科创成长层权限！把握打新、交易机会</p>
        <button aria-label="关闭">
          <Cross className="size-[38px]" />
        </button>
      </section>
      <Quote />
      <Notice />
      <PeriodTabs />
      <MaLegend />
      <Charts />
      <Promo />
      <InfoTabs />
      <Cards />
      <BottomBar />
    </div>
  );
}
